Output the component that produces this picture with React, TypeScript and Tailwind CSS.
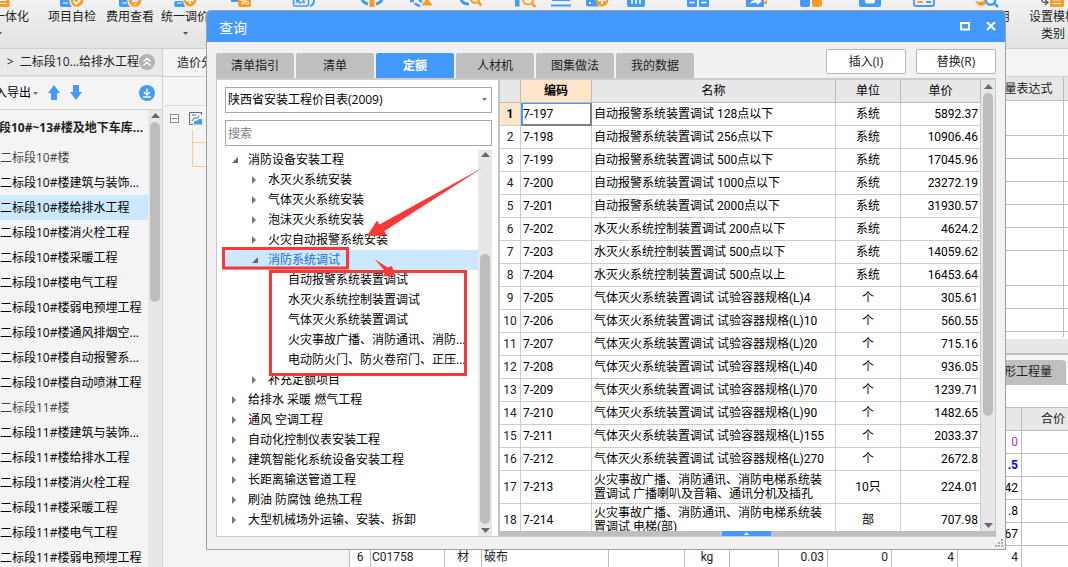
import React from "react";

const UI_FONT = "font-['Open_Sans','Noto_Sans_CJK_SC',sans-serif]";
const GRID_FONT = "font-['Roboto','Noto_Sans_CJK_SC',sans-serif]";

const BLUE = "#4499ff";
const ORANGE = "#ff9c27";

type Tool = { width: string; icon: React.ReactNode; lines: string[]; caret?: boolean };

const Check = () => <path d="M17.500 1l3 2.800 4.500-5" stroke="#fff" strokeWidth="1.800" fill="none" />;

const tools: Tool[] = [
  {
    width: "w-[60px]",
    lines: ["财评一体化"],
    caret: true,
    icon: (
      <>
        <rect x="12" y="-6" width="14.500" height="13" rx="1.500" fill={ORANGE} />
        <path d="M15 0.500h8M15 3.500h8" stroke="#fff" strokeWidth="1.200" />
      </>
    ),
  },
  {
    width: "w-[86px]",
    lines: ["项目自检"],
    icon: (
      <>
        <path d="M4 -2h9q0 6 3 9H6q-2 0-2-2z" fill={BLUE} />
        <path d="M7 3h5" stroke="#fff" />
        <circle cx="21" cy="0.500" r="6.300" fill={ORANGE} />
        <Check />
      </>
    ),
  },
  {
    width: "w-[30px]",
    lines: ["费用查看"],
    icon: (
      <>
        <path d="M5 -2h8q0 6 3 9H7q-2 0-2-2z" fill={BLUE} />
        <path d="M8 3h5" stroke="#fff" />
        <circle cx="21" cy="0.500" r="6.300" fill={ORANGE} />
        <path d="M18 2h6v-4h-6z" fill="#fff" />
        <path d="M20 4h2.500" stroke="#fff" />
      </>
    ),
  },
  {
    width: "w-[80px]",
    lines: ["统一调价"],
    caret: true,
    icon: (
      <>
        <path d="M6 1h8q1 4 2 6H7q-2 0-2-2z" fill={BLUE} />
        <path d="M8 3h5" stroke="#fff" />
        <circle cx="21" cy="0" r="6.500" fill={ORANGE} />
        <path d="M21 -4v8M17 0.500h8" stroke="#fff" strokeWidth="1.500" />
      </>
    ),
  },
  {
    width: "w-[30px]",
    lines: [],
    icon: (
      <>
        <path d="M7 1h8" stroke={BLUE} strokeWidth="2" />
        <rect x="14" y="-6" width="13" height="13" rx="2" fill={ORANGE} />
        <path d="M18 4l5-6" stroke="#fff" strokeWidth="1.300" />
        <circle cx="18" cy="-0.500" r="1.500" fill="#fff" />
        <circle cx="23" cy="2.800" r="1.500" stroke="#fff" fill="none" />
      </>
    ),
  },
  {
    width: "w-[98px]",
    lines: [],
    icon: (
      <>
        <path d="M5.500 -3v7q0 2 2 2h11q2 0 2-2v-7" stroke={BLUE} strokeWidth="1.600" fill="none" />
        <path d="M8 3q2-5 3-2t3 1 2-1v3M8 -0.500l4 4" stroke={BLUE} strokeWidth="1.300" fill="none" />
        <path d="M22 6q4-1 4-6" stroke={BLUE} strokeWidth="2" fill="none" />
      </>
    ),
  },
  {
    width: "w-[38px]",
    lines: [],
    icon: (
      <>
        <path d="M6 -1q1 4 6 5M26 -1q-1 4-6 5" stroke={BLUE} strokeWidth="3" fill="none" />
        <rect x="13.500" y="-4" width="5" height="11" fill={ORANGE} />
      </>
    ),
  },
  {
    width: "w-[60px]",
    lines: [],
    icon: (
      <>
        <path d="M5 1h4M10 3q1 2 5 3M14 0l3 2" stroke={BLUE} strokeWidth="2.500" fill="none" />
        <path d="M17 5.500q0-3 3-4v-3h4v3q3 1 3 4z" fill={ORANGE} />
      </>
    ),
  },
  {
    width: "w-[40px]",
    lines: [],
    icon: (
      <>
        <path d="M6 -1q1 5 8 5" stroke={BLUE} strokeWidth="3" fill="none" />
        <circle cx="20" cy="-1" r="4" stroke={ORANGE} strokeWidth="2.200" fill="none" />
        <path d="M22.500 1.500l4 4" stroke={ORANGE} strokeWidth="2.500" />
      </>
    ),
  },
  {
    width: "w-[70px]",
    lines: [],
    icon: (
      <>
        <rect x="5" y="-3" width="4.500" height="9.500" fill={BLUE} />
        <circle cx="18" cy="-0.500" r="5" stroke={ORANGE} strokeWidth="2" fill="none" />
        <path d="M21.500 3l4 4" stroke={ORANGE} strokeWidth="2.500" />
      </>
    ),
  },
  {
    width: "w-[0px]",
    lines: [],
    icon: <path d="M7 0h18M6 5.500h20" stroke={BLUE} strokeWidth="2.200" />,
  },
  {
    width: "w-[72px]",
    lines: [],
    icon: (
      <>
        <path d="M5 -2h10q0 6 3 8.500H7q-2 0-2-2z" fill={BLUE} />
        <path d="M8 3h2" stroke="#fff" strokeWidth="2" />
        <circle cx="21" cy="0" r="6.500" fill={ORANGE} />
        <path d="M21 -4v8M17 0h8" stroke="#fff" strokeWidth="2" />
      </>
    ),
  },
  {
    width: "w-[6px]",
    lines: [],
    icon: (
      <>
        <rect x="7" y="-6" width="18" height="13" rx="2" fill={BLUE} />
        <path d="M12 -1v5M16 -1v5M20 -1v5" stroke="#fff" strokeWidth="1.500" />
      </>
    ),
  },
  {
    width: "w-[118px]",
    lines: [],
    icon: (
      <>
        <rect x="5" y="-4" width="10" height="11" rx="1.500" fill={BLUE} />
        <rect x="17" y="-4" width="10" height="11" rx="1.500" fill={BLUE} />
        <path d="M7.500 2.500h5M19.500 2.500h5" stroke="#fff" strokeWidth="1.300" />
      </>
    ),
  },
  {
    width: "w-[0px]",
    lines: [],
    icon: (
      <>
        <rect x="5" y="-6" width="18" height="13" rx="1.500" fill={BLUE} />
        <path d="M22 4h4v-5" fill={ORANGE} />
        <path d="M9 4q1-4 6-4v-2l6 3-5 4v-2q-4-1-7 1z" fill="#fff" />
      </>
    ),
  },
  {
    width: "w-[108px]",
    lines: [],
    icon: (
      <>
        <rect x="5" y="-4" width="10" height="11" rx="2" fill={BLUE} />
        <rect x="17" y="-4" width="10" height="11" rx="2" fill={ORANGE} />
      </>
    ),
  },
  {
    width: "w-[11px]",
    lines: [],
    icon: (
      <>
        <rect x="4" y="-6" width="22" height="13" rx="2" fill={BLUE} />
        <path d="M10 -1v2q0 2.500 2.500 2.500h5q2.500 0 2.500-2.500v-2z" fill="#fff" />
      </>
    ),
  },
  {
    width: "w-[96px]",
    lines: [],
    icon: (
      <>
        <path d="M6 -3v7q0 2 2 2h16q2 0 2-2v-7" stroke={BLUE} strokeWidth="1.800" fill="none" />
        <path d="M9 2h6" stroke={ORANGE} strokeWidth="2" />
        <path d="M18 2h5" stroke={BLUE} strokeWidth="2" />
      </>
    ),
  },
  {
    width: "w-[28px]",
    lines: ["查询费用"],
    icon: (
      <>
        <path d="M5 0q4 4 10 0v5q-5 2-8-1z" fill={ORANGE} />
        <circle cx="20.500" cy="0" r="4.800" stroke={BLUE} strokeWidth="2.500" fill="none" />
        <path d="M24 3l4 4" stroke={BLUE} strokeWidth="2.500" />
      </>
    ),
  },
  {
    width: "w-[106px]",
    lines: ["设置模板", "类别"],
    icon: (
      <>
        <path d="M5 -2v3q0 1.500 5 1.500M8 0l3 2.500-3 2.500" stroke="#555" strokeWidth="1.300" fill="none" />
        <rect x="13" y="-6" width="14" height="13" rx="1.500" fill={ORANGE} />
        <path d="M16 0h8M16 3.500h8" stroke="#fff" strokeWidth="1.200" />
      </>
    ),
  },
];

function Toolbar() {
  return (
    <header className="h-[49px] shrink-0 overflow-hidden border-b border-[#cfcfcf] bg-linear-to-b from-[#f2f2f2] to-[#e2e2e2]">
      <div className="-ml-[31px] flex">
        {tools.map((t, i) => (
          <div key={i} className={`flex shrink-0 flex-col items-center ${t.width}`}>
            <svg className="h-2 w-8 shrink-0" viewBox="0 0 32 8">
              {t.icon}
            </svg>
            {t.lines.map((l) => (
              <span key={l} className="leading-[17px] whitespace-nowrap text-[#222]">
                {l}
              </span>
            ))}
            {t.caret && (
              <svg className="mt-[7px] h-[3px] w-[5px]" viewBox="0 0 5 3">
                <path d="M0 0h5L2.500 3z" fill="#555" />
              </svg>
            )}
          </div>
        ))}
      </div>
    </header>
  );
}

const projects = [
  { name: "二标段10#楼", group: true },
  { name: "二标段10#楼建筑与装饰..." },
  { name: "二标段10#楼给排水工程", active: true },
  { name: "二标段10#楼消火栓工程" },
  { name: "二标段10#楼采暖工程" },
  { name: "二标段10#楼电气工程" },
  { name: "二标段10#楼弱电预埋工程" },
  { name: "二标段10#楼通风排烟空..." },
  { name: "二标段10#楼自动报警系..." },
  { name: "二标段10#楼自动喷淋工程" },
  { name: "二标段11#楼", group: true },
  { name: "二标段11#楼建筑与装饰..." },
  { name: "二标段11#楼给排水工程" },
  { name: "二标段11#楼消火栓工程" },
  { name: "二标段11#楼采暖工程" },
  { name: "二标段11#楼电气工程" },
  { name: "二标段11#楼弱电预埋工程" },
];

function ScrollArrow({ down = false }: { down?: boolean }) {
  return (
    <svg className="h-[5px] w-[9px] shrink-0" viewBox="0 0 9 5">
      <path d={down ? "M0 0h9L4.500 5z" : "M0 5h9L4.500 0z"} fill="#666870" />
    </svg>
  );
}

function Sidebar() {
  return (
    <aside className="flex w-[163px] shrink-0 flex-col border-r border-[#d0d0d0]">
      <div className="flex h-7 shrink-0 items-center justify-end border-b-2 border-[#dcdcdc] bg-[#e9e9e9] pr-[7px] text-[#222]">
        <span className="whitespace-nowrap">楼 &nbsp;&gt; &nbsp;二标段10...给排水工程</span>
        <button aria-label="折叠" className="shrink-0">
          <svg className="size-4" viewBox="0 0 16 16">
            <circle cx="8" cy="8" r="8" fill="#b4b4b4" />
            <path d="M4.500 7.500L8 4.500l3.500 3M4.500 11.500L8 8.500l3.500 3" stroke="#fff" strokeWidth="1.500" fill="none" />
          </svg>
        </button>
      </div>
      <div className="flex h-[33px] shrink-0 items-center border-b border-[#d4d4d4] pr-[7px]">
        <button className="-ml-[17px] flex shrink-0 items-center whitespace-nowrap">
          导入导出
          <svg className="ml-0.5 h-[3px] w-[5px]" viewBox="0 0 5 3">
            <path d="M0 0h5L2.500 3z" fill="#777" />
          </svg>
        </button>
        <button aria-label="上移" className="ml-2.5">
          <svg className="h-4 w-3" viewBox="0 0 12 16">
            <path d="M6 0l6 8H9v7H3V8H0z" fill={BLUE} />
          </svg>
        </button>
        <button aria-label="下移" className="ml-2.5">
          <svg className="h-4 w-3" viewBox="0 0 12 16">
            <path d="M6 15l6-8H9V0H3v7H0z" fill={BLUE} />
          </svg>
        </button>
        <button aria-label="下载" className="ml-auto">
          <svg className="size-4" viewBox="0 0 16 16">
            <circle cx="8" cy="8" r="8" fill={BLUE} />
            <path d="M8 3.500v6M5 7l3 3 3-3M4 12h8" stroke="#fff" strokeWidth="1.400" fill="none" />
          </svg>
        </button>
      </div>
      <div className="flex min-h-0 flex-1">
        <ul className="min-w-0 flex-1 overflow-hidden whitespace-nowrap">
          <li className="-ml-px h-[35px] leading-[35px] font-bold text-[#222]">段10#~13#楼及地下车库...</li>
          {projects.map((p) => (
            <li
              key={p.name}
              className={`h-[25px] leading-[25px] ${p.active ? "bg-[#cbe8ff]" : ""} ${p.group ? "text-[#444]" : "text-black"}`}
            >
              {p.name}
            </li>
          ))}
        </ul>
        <div className="flex w-[14px] flex-col items-center bg-[#e7e7e7] pt-[3px]">
          <ScrollArrow />
          <div className="mt-1 h-[180px] w-2.5 rounded-full bg-[#bdbdbd]" />
        </div>
      </div>
    </aside>
  );
}

const upperRows = ["h-[35px]", "h-[23px]", "h-[23px]", "h-[23px]", "h-[23px]", "h-[23px]", "h-[35px]", "h-[23px]", "h-[23px]", "h-[23px]"];

const lowerRows = [
  { total: "0", style: "text-[#a63cc0]" },
  { total: ".5", style: "font-bold text-[#0000f0]" },
  { total: "42", style: "" },
  { total: ".8", style: "" },
  { total: "67", style: "" },
];

const lowerCols = ["w-[21px]", "w-[74px]", "w-[37px]", "w-[127px]", "w-[76px]", "w-[45px]", "w-[49px]", "w-[49px]", "w-[64px]", "w-[66px]", "w-[64px]", "w-[63px]"];

function Workspace() {
  const cell = "h-[23px] border-r border-b border-[#bdbdbd]";
  return (
    <main className="flex min-w-0 flex-1 flex-col">
      <div className="h-7 shrink-0 border-b border-[#d0d0d0] pl-3.5 leading-7 text-[#222]">造价分析</div>
      <div className="flex min-h-0 flex-1">
        <div className="w-[186px] shrink-0 pl-0.5">
          <div className="h-[29px] border-b border-[#d8d8d8]" />
          <svg className="ml-[5px] h-[66px] w-10" viewBox="0 0 40 66">
            <rect x="0.500" y="8.500" width="8" height="8" fill="#fff" stroke="#8a8f96" />
            <path d="M2 12.500h5" stroke="#2a9ad8" />
            <path d="M31 6.500H19.500v12H23M31.500 6v3" stroke="#666" fill="none" />
            <path d="M22 9h4" stroke="#7ab8ff" strokeWidth="2" />
            <path d="M29 9.500l-1.500 2.500H24l-2 3" stroke="#666" fill="none" />
            <path d="M24 18.500v-3l3-1 2-1.500h3v5.500z" fill={BLUE} />
            <path d="M22.500 24v36.500H40M22.500 36.500H40" stroke="#ffc987" fill="none" />
          </svg>
        </div>
        <div className={`flex min-w-0 flex-1 flex-col overflow-hidden border-l border-[#bdbdbd] bg-white ${GRID_FONT}`}>
          <div className="h-[260px] shrink-0 overflow-hidden">
            <table className="w-full table-fixed border-separate border-spacing-0">
              <thead>
                <tr>
                  <th className="h-6 border-r border-b border-[#bdbdbd] bg-[#e7e7e7]" />
                  <th className="h-6 w-[94px] border-r border-b border-[#bdbdbd] bg-[#e7e7e7] p-0 font-normal text-[#222]">工程量表达式</th>
                  <th className="h-6 w-1 border-b border-[#bdbdbd] bg-[#e7e7e7] p-0" />
                </tr>
              </thead>
              <tbody>
                {upperRows.map((h, i) => (
                  <tr key={i}>
                    <td className={`border-r border-b border-[#bdbdbd] p-0 ${h}`} />
                    <td className={`border-r border-b border-[#bdbdbd] p-0 ${h}`} />
                    <td className={`border-b border-[#bdbdbd] p-0 ${h}`} />
                  </tr>
                ))}
              </tbody>
            </table>
          </div>
          <div className="mt-0.5 h-4 shrink-0 border-b-2 border-[#bdbdbd] bg-[#e7e7e7]" />
          <div className={`flex h-[30px] shrink-0 items-end justify-end border-b border-[#bdbdbd] bg-[#f4f4f4] pr-0.5 ${UI_FONT}`}>
            <button className="h-6 w-[88px] rounded-t-sm bg-[#bfbfbf] text-[#222]">图形工程量</button>
          </div>
          <div className="mt-[22px] border-t border-[#bdbdbd]">
            <table className="w-[735px] table-fixed border-separate border-spacing-0">
              <thead>
                <tr className="bg-[#e7e7e7]">
                  {lowerCols.map((w, i) => (
                    <th key={i} className={`${cell} ${w} p-0 font-normal text-[#222]`}>
                      {i === 11 ? "合价" : ""}
                    </th>
                  ))}
                </tr>
              </thead>
              <tbody>
                {lowerRows.map((r) => (
                  <tr key={r.total}>
                    {lowerCols.slice(2).map((_, i) => (
                      <td key={i} className={`${cell} p-0`} />
                    ))}
                    <td className={`${cell} p-0 pr-[3px] text-right ${r.style}`}>{r.total}</td>
                    <td className={`${cell} p-0`} />
                  </tr>
                ))}
                <tr className="text-[#222]">
                  <td className={`${cell} p-0 text-center`}>6</td>
                  <td className={`${cell} p-0 pl-px`}>C01758</td>
                  <td className={`${cell} p-0 text-center`}>材</td>
                  <td className={`${cell} p-0 pl-0.5`}>破布</td>
                  <td className={`${cell} p-0`} />
                  <td className={`${cell} p-0 text-center`}>kg</td>
                  <td className={`${cell} p-0`} />
                  <td className={`${cell} p-0 pr-[3px] text-right`}>0.03</td>
                  <td className={`${cell} p-0 pr-[3px] text-right`}>0</td>
                  <td className={`${cell} p-0 pr-[3px] text-right`}>4</td>
                  <td className={`${cell} p-0 pr-[3px] text-right`}>4</td>
                  <td className={`${cell} p-0`} />
                </tr>
              </tbody>
            </table>
          </div>
        </div>
      </div>
    </main>
  );
}

const tabs = ["清单指引", "清单", "定额", "人材机", "图集做法", "我的数据"];

type Node = { name: string; level: 0 | 1 | 2; state?: "open" | "closed"; active?: boolean };

const tree: Node[] = [
  { name: "消防设备安装工程", level: 0, state: "open" },
  { name: "水灭火系统安装", level: 1, state: "closed" },
  { name: "气体灭火系统安装", level: 1, state: "closed" },
  { name: "泡沫灭火系统安装", level: 1, state: "closed" },
  { name: "火灾自动报警系统安装", level: 1, state: "closed" },
  { name: "消防系统调试", level: 1, state: "open", active: true },
  { name: "自动报警系统装置调试", level: 2 },
  { name: "水灭火系统控制装置调试", level: 2 },
  { name: "气体灭火系统装置调试", level: 2 },
  { name: "火灾事故广播、消防通讯、消防...", level: 2 },
  { name: "电动防火门、防火卷帘门、正压...", level: 2 },
  { name: "补充定额项目", level: 1, state: "closed" },
  { name: "给排水 采暖 燃气工程", level: 0, state: "closed" },
  { name: "通风 空调工程", level: 0, state: "closed" },
  { name: "自动化控制仪表安装工程", level: 0, state: "closed" },
  { name: "建筑智能化系统设备安装工程", level: 0, state: "closed" },
  { name: "长距离输送管道工程", level: 0, state: "closed" },
  { name: "刷油 防腐蚀 绝热工程", level: 0, state: "closed" },
  { name: "大型机械场外运输、安装、拆卸", level: 0, state: "closed" },
];

const indent = { 0: "pl-1.5", 1: "pl-[26px]", 2: "pl-[46px]" };

function TreePanel() {
  return (
    <section className="flex w-[282px] shrink-0 flex-col border-l border-[#c8c8c8] bg-white pt-[7px] pr-1.5 pl-2">
      <div className="relative shrink-0">
        <select
          aria-label="价目表"
          className="h-[26px] w-full appearance-none border border-[#a8a8a8] bg-white pl-0.5 text-black"
        >
          <option>陕西省安装工程价目表(2009)</option>
        </select>
        <svg className="pointer-events-none absolute top-[11px] right-[5px] h-[3px] w-[5px]" viewBox="0 0 5 3">
          <path d="M0 0h5L2.500 3z" fill="#777" />
        </svg>
      </div>
      <input
        aria-label="搜索"
        placeholder="搜索"
        className="mt-[7px] h-[26px] w-full shrink-0 border border-[#a8a8a8] bg-white pl-0.5 placeholder:text-[#808080]"
      />
      <div className="mt-1 flex min-h-0 flex-1">
        <ul className="min-w-0 flex-1 overflow-hidden whitespace-nowrap">
          {tree.map((n) => (
            <li
              key={n.name}
              className={`flex h-5 items-center leading-5 ${indent[n.level]} ${n.active ? "bg-[#cbe8ff] text-[#1f6fe0]" : "text-black"}`}
            >
              <svg className="mr-[7px] h-2 w-2.5 shrink-0" viewBox="0 0 10 8">
                {n.state === "open" && <path d="M7 1v6H1z" fill="#666" />}
                {n.state === "closed" && <path d="M1 0v8L5 4z" fill="#777" />}
              </svg>
              {n.name}
            </li>
          ))}
        </ul>
        <div className="flex w-[14px] shrink-0 flex-col items-center bg-[#e7e7e7] pt-0.5 pb-[3px]">
          <ScrollArrow />
          <div className="mt-[97px] mb-1 w-2.5 flex-1 rounded-full bg-[#bdbdbd]" />
          <ScrollArrow down />
        </div>
      </div>
    </section>
  );
}

const quota: [string, string, string, string][] = [
  ["7-197", "自动报警系统装置调试 128点以下", "系统", "5892.37"],
  ["7-198", "自动报警系统装置调试 256点以下", "系统", "10906.46"],
  ["7-199", "自动报警系统装置调试 500点以下", "系统", "17045.96"],
  ["7-200", "自动报警系统装置调试 1000点以下", "系统", "23272.19"],
  ["7-201", "自动报警系统装置调试 2000点以下", "系统", "31930.57"],
  ["7-202", "水灭火系统控制装置调试 200点以下", "系统", "4624.2"],
  ["7-203", "水灭火系统控制装置调试 500点以下", "系统", "14059.62"],
  ["7-204", "水灭火系统控制装置调试 500点以上", "系统", "16453.64"],
  ["7-205", "气体灭火系统装置调试 试验容器规格(L)4", "个", "305.61"],
  ["7-206", "气体灭火系统装置调试 试验容器规格(L)10", "个", "560.55"],
  ["7-207", "气体灭火系统装置调试 试验容器规格(L)20", "个", "715.16"],
  ["7-208", "气体灭火系统装置调试 试验容器规格(L)40", "个", "936.05"],
  ["7-209", "气体灭火系统装置调试 试验容器规格(L)70", "个", "1239.71"],
  ["7-210", "气体灭火系统装置调试 试验容器规格(L)90", "个", "1482.65"],
  ["7-211", "气体灭火系统装置调试 试验容器规格(L)155", "个", "2033.37"],
  ["7-212", "气体灭火系统装置调试 试验容器规格(L)270", "个", "2672.8"],
  ["7-213", "火灾事故广播、消防通讯、消防电梯系统装置调试 广播喇叭及音箱、通讯分机及插孔", "10只", "224.01"],
  ["7-214", "火灾事故广播、消防通讯、消防电梯系统装置调试 电梯(部)", "部", "707.98"],
];

function QuotaTable() {
  const head = "h-[23px] border-r border-b border-[#bdbdbd] p-0 font-normal text-black";
  const line = "border-r border-b border-[#cccccc] p-0";
  return (
    <section className="flex min-w-0 flex-1 flex-col border-l-2 border-[#c4c4c4]">
      <div className="flex min-h-0 flex-1 border-r border-[#c8c8c8] bg-white">
        <div className={`min-w-0 flex-1 overflow-hidden ${GRID_FONT}`}>
          <table className="w-full table-fixed border-separate border-spacing-0 text-black">
            <thead>
              <tr className="bg-[#e7e7e7]">
                <th className={`${head} w-[21px]`} />
                <th className={`${head} w-[71px] bg-[#ffe6c8]`}>
                  <b>编码</b>
                </th>
                <th className={head}>名称</th>
                <th className={`${head} w-[65px]`}>单位</th>
                <th className={`${head} w-[80px]`}>单价</th>
              </tr>
            </thead>
            <tbody>
              {quota.map(([code, name, unit, price], i) => {
                const h = i < 16 ? "h-[23px]" : "h-[33px]";
                return (
                  <tr key={code}>
                    <td className={`${line} ${h} text-center ${i === 0 ? "bg-[#ffe6c8] font-bold" : "text-[#222]"}`}>{i + 1}</td>
                    <td
                      className={
                        i === 0
                          ? "h-[23px] border-t border-r-2 border-b-2 border-l-2 border-t-[#4499ff] border-r-[#808080] border-b-[#808080] border-l-[#4499ff] p-0"
                          : `${line} ${h} pl-0.5`
                      }
                    >
                      {code}
                    </td>
                    <td className={`${line} ${h} pr-2.5 pl-0.5 leading-[14px]`}>{name}</td>
                    <td className={`${line} ${h} text-center`}>{unit}</td>
                    <td className={`${line} ${h} pr-0.5 text-right`}>{price}</td>
                  </tr>
                );
              })}
            </tbody>
          </table>
        </div>
        <div className="flex w-[14px] shrink-0 flex-col items-center bg-[#e7e7e7] pt-1 pb-[3px]">
          <ScrollArrow />
          <div className="mt-1 mb-auto h-[323px] w-2.5 rounded-full bg-[#bdbdbd]" />
          <ScrollArrow down />
        </div>
      </div>
      <div className="flex h-[5px] shrink-0 justify-center bg-[#bfbfbf] pr-1">
        <button aria-label="展开" className="flex w-[49px] items-center justify-center bg-[#4499ff]">
          <svg className="h-[3px] w-[5px]" viewBox="0 0 5 3">
            <path d="M0 3h5L2.500 0z" fill="#fff" />
          </svg>
        </button>
      </div>
    </section>
  );
}

function QueryDialog() {
  return (
    <div
      role="dialog"
      aria-label="查询"
      className="absolute top-[10px] right-[62px] bottom-[17px] left-[206px] flex flex-col rounded-t-[4px] border border-[#a0a0a0] bg-[#f1f1f1]"
    >
      <div className="flex h-[31px] shrink-0 items-center rounded-t-[3px] bg-[#4499ff] pr-[9px] pl-3 text-white">
        <h1 className="mt-0.5 text-sm">查询</h1>
        <button aria-label="最大化" className="ml-auto">
          <svg className="size-2.5" viewBox="0 0 10 10">
            <rect x="1" y="1" width="8" height="6.500" stroke="#fff" strokeWidth="2" fill="none" />
          </svg>
        </button>
        <button aria-label="关闭" className="ml-4">
          <svg className="size-2.5" viewBox="0 0 10 10">
            <path d="M1 0l8 8M9 0l-8 8" stroke="#fff" strokeWidth="2" />
          </svg>
        </button>
      </div>
      <div className="flex h-9 shrink-0 items-end gap-0.5 pr-[9px] pl-[9px]">
        {tabs.map((t) => (
          <button
            key={t}
            className={`h-[25px] w-[78px] rounded-t-xs ${t === "定额" ? "bg-[#4499ff] font-bold text-white" : "bg-[#bfbfbf] text-[#222]"}`}
          >
            {t}
          </button>
        ))}
        <div className="mb-1 ml-auto flex gap-2.5">
          <button className="h-[25px] w-20 rounded-xs border border-[#b8b8b8] bg-white text-[#222]">插入(I)</button>
          <button className="h-[25px] w-20 rounded-xs border border-[#b8b8b8] bg-white text-[#222]">替换(R)</button>
        </div>
      </div>
      <div className="mx-[9px] flex min-h-0 flex-1 border-t-2 border-b border-[#cccccc]">
        <TreePanel />
        <QuotaTable />
      </div>
      <div className="flex h-3 shrink-0 items-end justify-end pr-0.5 pb-0.5">
        <svg className="h-2 w-2" viewBox="0 0 8 8">
          <path d="M6 0h2v2H6zM3 3h2v2H3zM6 3h2v2H6zM0 6h2v2H0zM3 6h2v2H3zM6 6h2v2H6z" fill="#b0b0b0" />
        </svg>
      </div>
    </div>
  );
}

function Annotations() {
  return (
    <svg className="pointer-events-none absolute top-0 left-0 h-[400px] w-[500px]" viewBox="0 0 500 400">
      <g fill="none" stroke="#fb3838" strokeWidth="3">
        <rect x="223.500" y="248.500" width="124" height="19.500" />
        <rect x="270.500" y="271.500" width="195" height="103" />
      </g>
      <path d="M483 167.500L384.500 231l2.500 4.500-20 .5 10-15.500 2.500 4z" fill="#fb3838" />
      <path d="M374.500 259l13 8.500 4.500-1.500 3 9.500-12 1 2.500-5z" fill="#fb3838" />
    </svg>
  );
}

export default function App() {
  return (
    <div className={`relative flex h-screen flex-col overflow-hidden bg-[#f4f4f4] text-xs text-black ${UI_FONT}`}>
      <Toolbar />
      <div className="flex min-h-0 flex-1">
        <Sidebar />
        <Workspace />
      </div>
      <QueryDialog />
      <Annotations />
    </div>
  );
}
